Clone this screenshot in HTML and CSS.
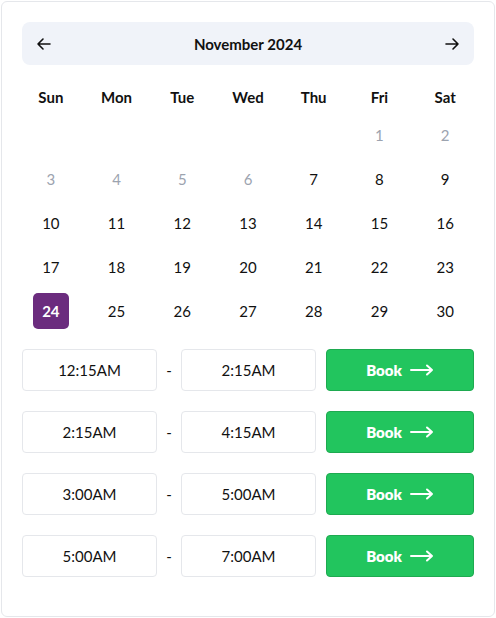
FILE: index.html
```html
<!DOCTYPE html>
<html>
<head>
<meta charset="utf-8">
<link rel="stylesheet" href="styles.css">
</head>
<body>
<div class="card">
  <div class="month-bar">
    <button class="nav" aria-label="Previous">
      <svg width="16" height="16" viewBox="0 0 16 16" fill="none" stroke="#111" stroke-width="1.6" stroke-linecap="round" stroke-linejoin="round"><path d="M14 8H2M7 3L2 8l5 5"/></svg>
    </button>
    <div class="month-title">November 2024</div>
    <button class="nav" aria-label="Next">
      <svg width="16" height="16" viewBox="0 0 16 16" fill="none" stroke="#111" stroke-width="1.6" stroke-linecap="round" stroke-linejoin="round"><path d="M2 8h12M9 3l5 5-5 5"/></svg>
    </button>
  </div>
  <div class="grid weekdays">
    <div>Sun</div><div>Mon</div><div>Tue</div><div>Wed</div><div>Thu</div><div>Fri</div><div>Sat</div>
  </div>
  <div class="grid days">
    <div></div><div></div><div></div><div></div><div></div>
    <div class="day muted">1</div><div class="day muted">2</div>
    <div class="day muted">3</div><div class="day muted">4</div><div class="day muted">5</div><div class="day muted">6</div>
    <div class="day">7</div><div class="day">8</div><div class="day">9</div>
    <div class="day">10</div><div class="day">11</div><div class="day">12</div><div class="day">13</div><div class="day">14</div><div class="day">15</div><div class="day">16</div>
    <div class="day">17</div><div class="day">18</div><div class="day">19</div><div class="day">20</div><div class="day">21</div><div class="day">22</div><div class="day">23</div>
    <div class="day"><span class="selected">24</span></div><div class="day">25</div><div class="day">26</div><div class="day">27</div><div class="day">28</div><div class="day">29</div><div class="day">30</div>
  </div>
  <div class="slots">
    <div class="slot">
      <div class="time">12:15AM</div><div class="dash">-</div><div class="time">2:15AM</div>
      <button class="book">Book <svg width="24" height="12" viewBox="0 0 24 12" fill="none" stroke="#fff" stroke-width="2" stroke-linecap="round" stroke-linejoin="round"><path d="M1 6h21M17 1.5L22 6l-5 4.5"/></svg></button>
    </div>
    <div class="slot">
      <div class="time">2:15AM</div><div class="dash">-</div><div class="time">4:15AM</div>
      <button class="book">Book <svg width="24" height="12" viewBox="0 0 24 12" fill="none" stroke="#fff" stroke-width="2" stroke-linecap="round" stroke-linejoin="round"><path d="M1 6h21M17 1.5L22 6l-5 4.5"/></svg></button>
    </div>
    <div class="slot">
      <div class="time">3:00AM</div><div class="dash">-</div><div class="time">5:00AM</div>
      <button class="book">Book <svg width="24" height="12" viewBox="0 0 24 12" fill="none" stroke="#fff" stroke-width="2" stroke-linecap="round" stroke-linejoin="round"><path d="M1 6h21M17 1.5L22 6l-5 4.5"/></svg></button>
    </div>
    <div class="slot">
      <div class="time">5:00AM</div><div class="dash">-</div><div class="time">7:00AM</div>
      <button class="book">Book <svg width="24" height="12" viewBox="0 0 24 12" fill="none" stroke="#fff" stroke-width="2" stroke-linecap="round" stroke-linejoin="round"><path d="M1 6h21M17 1.5L22 6l-5 4.5"/></svg></button>
    </div>
  </div>
</div>
</body>
</html>
```
FILE: styles.css
```css
* { box-sizing: border-box; }
html, body { margin: 0; background: #fff; }
body {
  padding: 1px 1px 0 1px;
  font-family: Lato, "Noto Sans", sans-serif;
  color: #111;
}
.card {
  width: 494px;
  height: 616px;
  border: 1px solid #e5e7eb;
  border-radius: 6px;
  padding: 20px 20px 0 20px;
}
.month-bar {
  height: 43px;
  background: #f0f3f9;
  border-radius: 8px;
  display: flex;
  align-items: center;
  justify-content: space-between;
  padding: 0 14px;
}
.nav {
  border: 0;
  background: none;
  padding: 0;
  width: 16px;
  height: 16px;
  display: flex;
}
.month-title {
  font-size: 15px;
  font-weight: 700;
}
.grid {
  display: grid;
  grid-template-columns: repeat(7, 1fr);
  column-gap: 8px;
}
.weekdays {
  margin-top: 22px;
  height: 20px;
  align-items: center;
  text-align: center;
  font-size: 15px;
  font-weight: 700;
}
.days {
  margin-top: 6px;
  grid-auto-rows: 44px;
}
.day {
  display: flex;
  align-items: center;
  justify-content: center;
  font-size: 15px;
}
.muted { color: #9ca3af; }
.selected {
  width: 36px;
  height: 36px;
  border-radius: 5px;
  background: #6b2c7e;
  color: #fff;
  font-weight: 700;
  display: flex;
  align-items: center;
  justify-content: center;
}
.slots {
  margin-top: 16px;
  display: flex;
  flex-direction: column;
  gap: 20px;
}
.slot {
  display: flex;
  align-items: center;
  height: 42px;
}
.time {
  width: 135px;
  height: 42px;
  border: 1px solid #e5e7eb;
  border-radius: 4px;
  display: flex;
  align-items: center;
  justify-content: center;
  font-size: 15px;
}
.dash {
  width: 24px;
  text-align: center;
  font-size: 15px;
}
.book {
  margin-left: 10px;
  width: 148px;
  height: 42px;
  background: #22c55e;
  border: 1px solid #1eaa50;
  border-radius: 4px;
  color: #fff;
  font-family: inherit;
  font-size: 15px;
  font-weight: 800;
  display: flex;
  align-items: center;
  justify-content: center;
  gap: 8px;
}
```
